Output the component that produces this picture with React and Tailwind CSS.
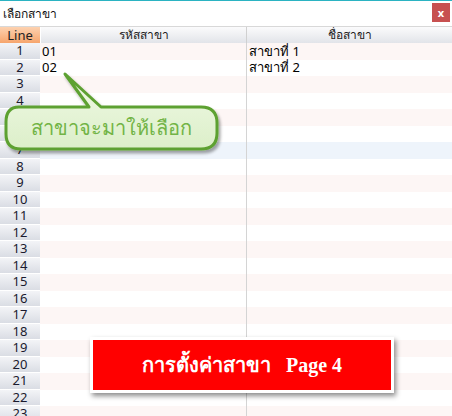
const rows = [
  { code: "01", name: "สาขาที่ 1" },
  { code: "02", name: "สาขาที่ 2" },
];

const font = { fontFamily: "Tahoma, 'Noto Sans', 'DejaVu Sans', sans-serif" };

const App = () => {
  const lines = Array.from({ length: 23 }, (_, i) => i + 1);

  return (
    <div
      className="relative w-[452px] h-[416px] overflow-hidden bg-white text-[12px] leading-none text-black"
      style={font}
    >
      <div className="h-px bg-[#2bb3c2]" />
      {/* title bar */}
      <div className="flex h-[25px] items-center justify-between pl-[3px] pr-[2px]">
        <span className="text-[12px] text-[#111]">เลือกสาขา</span>
        <div className="mb-[3px] flex h-[19px] w-[18px] items-center justify-center bg-[#c75050] text-[11px] font-bold text-white">
          x
        </div>
      </div>

      {/* header */}
      <div className="grid h-[17px] grid-cols-[40px_206px_206px] border-t border-[#d8d8d8]">
        <div className="flex items-center justify-center overflow-hidden bg-gradient-to-b from-[#fdd2b0] to-[#f6a56c] text-[13px] text-[#222]">
          Line
        </div>
        <div className="flex items-center justify-center overflow-hidden border-l border-white bg-gradient-to-b from-[#fbfbfc] to-[#e2e4e9] text-[#222]">
          รหัสสาขา
        </div>
        <div className="flex items-center justify-center overflow-hidden border-l border-[#d0d0d0] bg-gradient-to-b from-[#fbfbfc] to-[#e2e4e9] text-[#222]">
          ชื่อสาขา
        </div>
      </div>

      {/* rows */}
      {lines.map((n) => {
        const r = rows[n - 1];
        const bg =
          n === 7 ? "bg-[#eef4fb]" : n % 2 === 1 ? "bg-[#fdf6f5]" : "bg-white";
        return (
          <div key={n} className="grid h-[16.5px] grid-cols-[40px_206px_206px]">
            <div className="flex items-center justify-center border-b border-white bg-gradient-to-b from-[#f3f4f7] to-[#dadde4] text-[13px] text-[#1a1a2e]">
              {n}
            </div>
            <div className={`flex items-center pl-[2px] text-[13px] ${bg}`}>
              {r?.code}
            </div>
            <div className={`flex items-center border-l border-[#d4d4d4] pl-[2px] text-[13px] ${bg}`}>
              {r?.name}
            </div>
          </div>
        );
      })}

      {/* callout */}
      <div className="absolute left-0 top-[70px] h-[90px] w-[230px]">
        <svg width="230" height="90" className="absolute left-0 top-0">
          <defs>
            <linearGradient id="cg" x1="0" y1="0" x2="0" y2="1">
              <stop offset="0" stopColor="#f0f9e6" />
              <stop offset="1" stopColor="#dcefc9" />
            </linearGradient>
            <filter id="cs" x="-10%" y="-10%" width="130%" height="140%">
              <feDropShadow dx="2" dy="3" stdDeviation="1.5" floodColor="#000" floodOpacity="0.35" />
            </filter>
          </defs>
          <path
            d="M19 37 H89 L65 4 L101 37 H201 Q217 37 217 53 V63 Q217 79 201 79 H21 Q6 79 6 64 V52 Q6 37 19 37 Z"
            fill="url(#cg)"
            stroke="#5da130"
            strokeWidth="3"
            strokeLinejoin="round"
            filter="url(#cs)"
          />
        </svg>
        <div className="absolute left-[6px] top-[37px] flex h-[42px] w-[211px] items-center justify-center text-[20px] font-light text-[#72b446]">
          สาขาจะมาให้เลือก
        </div>
      </div>

      {/* banner */}
      <div className="absolute left-[90px] top-[337px] flex h-[56px] w-[304px] items-center justify-center border-[3px] border-white bg-[#ff0000] shadow-[2px_3px_5px_rgba(0,0,0,0.45)]">
        <span
          className="whitespace-pre text-[20px] font-bold text-white"
          style={{ fontFamily: "'Times New Roman', 'Liberation Serif', serif" }}
        >
          {"การตั้งค่าสาขา   Page 4"}
        </span>
      </div>
    </div>
  );
};

export default App;
